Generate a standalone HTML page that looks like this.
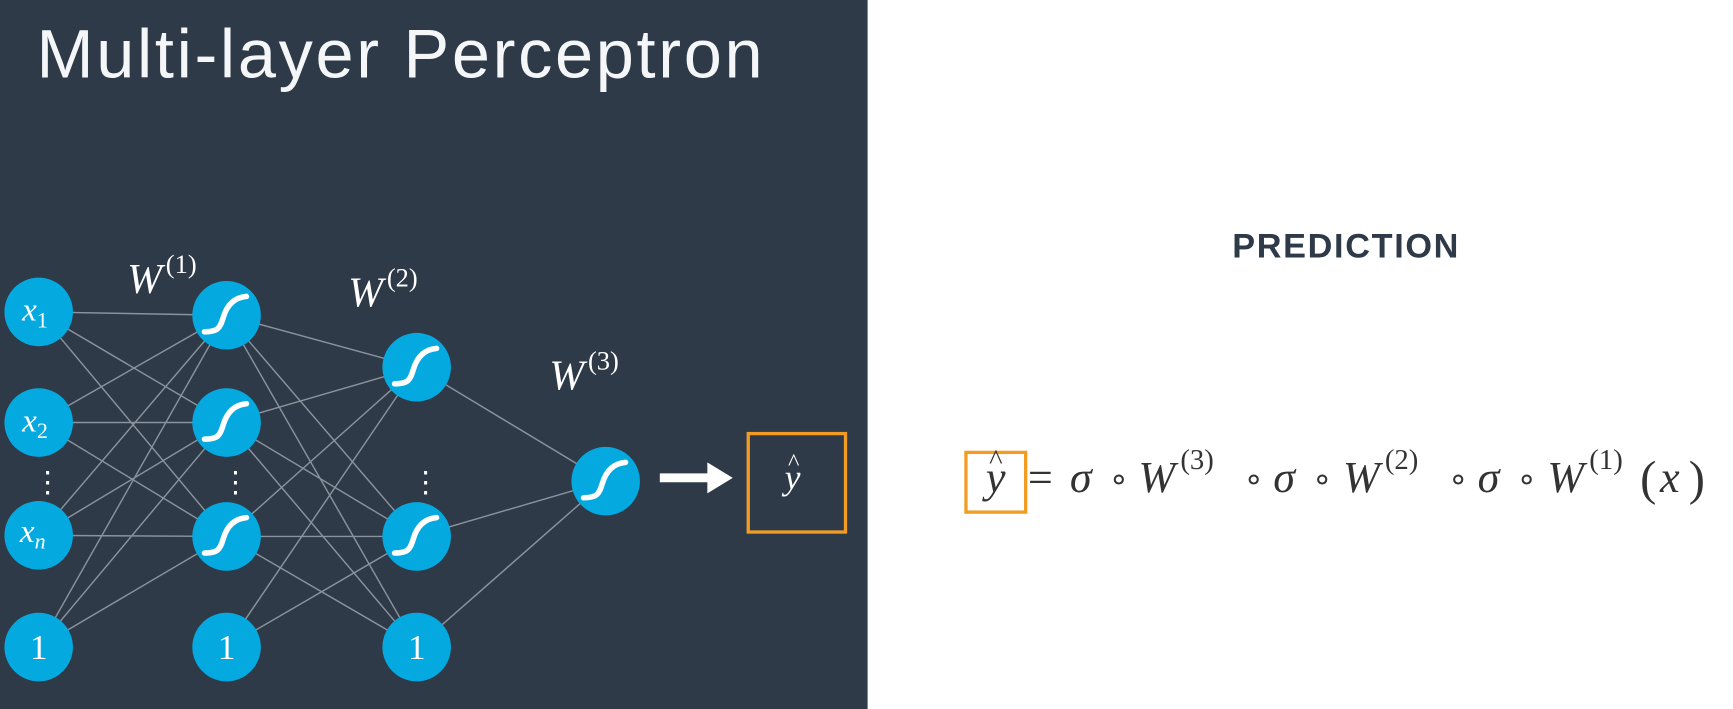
<!DOCTYPE html>
<html><head><meta charset="utf-8"><style>
html,body{margin:0;padding:0;width:1733px;height:709px;overflow:hidden;background:#fff}
svg{display:block}
</style></head><body>
<svg width="1733" height="709" viewBox="0 0 1568 641" preserveAspectRatio="none" xmlns="http://www.w3.org/2000/svg">
<rect x="0" y="0" width="785" height="641" fill="#2e3a48"/>
<text x="33" y="70" font-family="Liberation Sans, sans-serif" font-size="62" fill="#f4f6f8" textLength="657">Multi-layer Perceptron</text>
<g stroke="#8a939d" stroke-width="1.3">
<path d="M35 282L205 285M35 282L205 382M35 282L205 485M35 382L205 285M35 382L205 382M35 382L205 485M35 484L205 285M35 484L205 382M35 484L205 485M35 585L205 285M35 585L205 382M35 585L205 485"/>
<path d="M205 285L377 332M205 285L377 485M205 285L377 585M205 382L377 332M205 382L377 485M205 382L377 585M205 485L377 332M205 485L377 485M205 485L377 585M205 585L377 332M205 585L377 485"/>
<path d="M377 332L548 435M377 485L548 435M377 585L548 435"/>
</g>
<g fill="#04a9df">
<circle cx="35" cy="282" r="31"/><circle cx="35" cy="382" r="31"/><circle cx="35" cy="484" r="31"/><circle cx="35" cy="585" r="31"/>
<circle cx="205" cy="285" r="31"/><circle cx="205" cy="382" r="31"/><circle cx="205" cy="485" r="31"/><circle cx="205" cy="585" r="31"/>
<circle cx="377" cy="332" r="31"/><circle cx="377" cy="485" r="31"/><circle cx="377" cy="585" r="31"/>
<circle cx="548" cy="435" r="31"/>
</g>
<g fill="none" stroke="#fff" stroke-width="5" stroke-linecap="round">
<path d="M-20 15C-8 15 -6 12 -3 2S6 -16 18 -17" transform="translate(205,285)"/>
<path d="M-20 15C-8 15 -6 12 -3 2S6 -16 18 -17" transform="translate(205,382)"/>
<path d="M-20 15C-8 15 -6 12 -3 2S6 -16 18 -17" transform="translate(205,485)"/>
<path d="M-20 15C-8 15 -6 12 -3 2S6 -16 18 -17" transform="translate(377,332)"/>
<path d="M-20 15C-8 15 -6 12 -3 2S6 -16 18 -17" transform="translate(377,485)"/>
<path d="M-20 15C-8 15 -6 12 -3 2S6 -16 18 -17" transform="translate(548,435)"/>
</g>
<g fill="#fff" font-family="Liberation Serif, serif" font-size="30">
<text x="20" y="290" font-style="italic">x<tspan font-style="normal" font-size="20" dy="6">1</tspan></text>
<text x="20" y="390" font-style="italic">x<tspan font-style="normal" font-size="20" dy="6">2</tspan></text>
<text x="18" y="490" font-style="italic">x<tspan font-size="20" dy="6">n</tspan></text>
<text x="27" y="596" font-size="32">1</text><text x="197" y="596" font-size="32">1</text><text x="369" y="596" font-size="32">1</text>
<text x="115" y="265" font-size="38" font-style="italic">W</text><text x="150" y="247" font-size="24">(1)</text>
<text x="315" y="277" font-size="38" font-style="italic">W</text><text x="350" y="259" font-size="24">(2)</text>
<text x="497" y="352" font-size="38" font-style="italic">W</text><text x="532" y="334" font-size="24">(3)</text>
<text x="30" y="445" font-size="26">⋮</text><text x="200" y="445" font-size="26">⋮</text><text x="372" y="445" font-size="26">⋮</text>
<text x="710" y="442" font-size="32" font-style="italic">y</text><text x="713" y="425" font-size="22">^</text>
</g>
<path d="M597 428H640V418L663 432L640 446V436H597Z" fill="#fff"/>
<rect x="677" y="392" width="88" height="89" fill="none" stroke="#f39c24" stroke-width="3"/>
<text x="1218" y="233" text-anchor="middle" font-family="Liberation Sans, sans-serif" font-weight="bold" font-size="31" fill="#2e3a48" letter-spacing="1.5">PREDICTION</text>
<rect x="874" y="409" width="54" height="54" fill="none" stroke="#f39c24" stroke-width="3"/>
<g fill="#333" font-family="Liberation Serif, serif" font-size="40">
<text x="892" y="445" font-style="italic">y</text><text x="895" y="424" font-size="26">^</text>
<text x="930" y="445">=</text>
<text x="968" y="445" font-style="italic">σ</text><text x="1003" y="443" font-size="30">∘</text>
<text x="1030" y="445" font-style="italic">W</text><text x="1068" y="424" font-size="26">(3)</text>
<text x="1125" y="443" font-size="30">∘</text><text x="1152" y="445" font-style="italic">σ</text><text x="1187" y="443" font-size="30">∘</text>
<text x="1215" y="445" font-style="italic">W</text><text x="1253" y="424" font-size="26">(2)</text>
<text x="1310" y="443" font-size="30">∘</text><text x="1337" y="445" font-style="italic">σ</text><text x="1372" y="443" font-size="30">∘</text>
<text x="1400" y="445" font-style="italic">W</text><text x="1438" y="424" font-size="26">(1)</text>
<text x="1484" y="447" font-size="44">(</text><text x="1502" y="445" font-style="italic">x</text><text x="1528" y="447" font-size="44">)</text>
</g>
</svg>
</body></html>
